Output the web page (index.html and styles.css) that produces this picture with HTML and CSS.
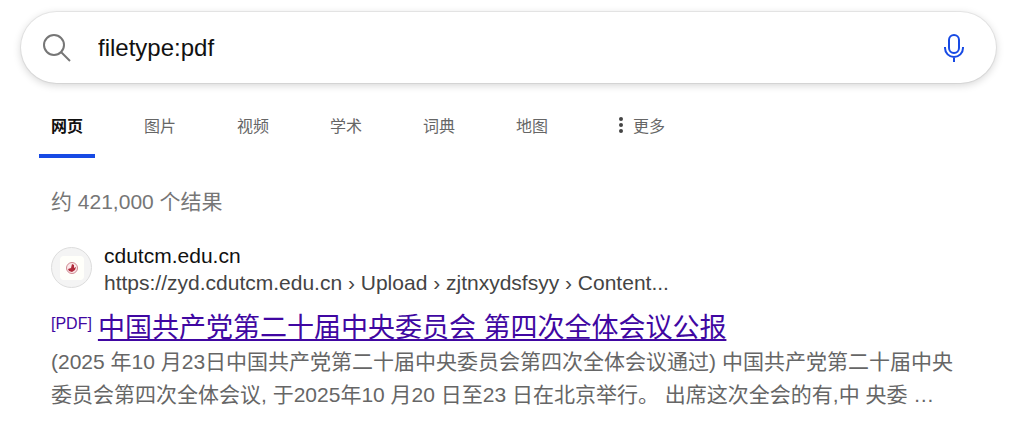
FILE: index.html
```html
<!DOCTYPE html>
<html lang="zh-CN">
<head>
<meta charset="UTF-8">
<meta name="viewport" content="width=device-width, initial-scale=1.0">
<title>filetype:pdf</title>
<link rel="stylesheet" href="styles.css">
</head>
<body>
    <header>
        <form class="search-box" role="search">
            <button type="submit" class="icon-button" aria-label="搜索">
                <svg width="28" height="28" viewBox="0 0 28 28" fill="none" stroke="#767676" stroke-width="2">
                    <circle cx="11" cy="11" r="10"/>
                    <path d="M18 18l9 9"/>
                </svg>
            </button>
            <input type="search" class="search-input" name="q" value="filetype:pdf" aria-label="搜索内容">
            <button type="button" class="icon-button" aria-label="语音搜索">
                <svg width="20" height="28" viewBox="0 0 20 28" fill="none" stroke="#174ae4" stroke-width="2">
                    <rect x="5" y="1" width="10" height="18" rx="5"/>
                    <path d="M1 13v1a9 9 0 0 0 18 0v-1M10 23v5"/>
                </svg>
            </button>
        </form>
        <nav class="tabs">
            <a href="#" class="tab active" aria-current="page">网页</a>
            <a href="#" class="tab">图片</a>
            <a href="#" class="tab">视频</a>
            <a href="#" class="tab">学术</a>
            <a href="#" class="tab">词典</a>
            <a href="#" class="tab">地图</a>
            <a href="#" class="tab more">
                <svg width="24" height="24" viewBox="0 0 24 24" fill="#444">
                    <circle cx="12" cy="6" r="2"/>
                    <circle cx="12" cy="12" r="2"/>
                    <circle cx="12" cy="18" r="2"/>
                </svg>更多</a>
        </nav>
    </header>

    <main class="results">
        <p class="count">约 421,000 个结果</p>
        <article>
            <a href="#" class="source">
                <span class="site-icon">
                    <svg width="24" height="24" viewBox="0 0 24 24">
                        <rect width="24" height="24" rx="4" fill="#fffffa"/>
                        <circle cx="12" cy="12" r="5.5" fill="#fbe9e9" stroke="#d08a92"/>
                        <path d="M12 8l2 1v3l2-1-1 3-3 2-3-1-1-2 3-1z" fill="#b02a3a"/>
                    </svg>
                </span>
                <span class="source-text">
                    <span class="site-name">cdutcm.edu.cn</span>
                    <cite class="site-url">https://zyd.cdutcm.edu.cn › Upload › zjtnxydsfsyy › Content...</cite>
                </span>
            </a>
            <h2 class="title"><span class="file-type">[PDF]</span><a href="#">中国共产党第二十届中央委员会 第四次全体会议公报</a></h2>
            <p class="snippet">(2025 年10 月23日中国共产党第二十届中央委员会第四次全体会议通过) 中国共产党第二十届中央委员会第四次全体会议, 于2025年10 月20 日至23 日在北京举行。 出席这次全会的有,中 央委 …</p>
        </article>
    </main>
</body>
</html>
```

FILE: styles.css
```css
* {
    margin: 0;
    padding: 0;
    box-sizing: border-box;
}
body {
    font-family: "Liberation Sans", "Noto Sans CJK SC", sans-serif;
    background-color: #fff;
    color: #666;
}
a {
    color: inherit;
    text-decoration: none;
}
svg {
    display: block;
}
.search-box {
    display: flex;
    align-items: center;
    height: 71px;
    margin: 12px 25px 0 21px;
    padding: 0 32px 0 22px;
    border-radius: 36px;
    background-color: #fff;
    box-shadow: 0 0 0 1px rgba(0, 0, 0, 0.06), 0 2px 8px rgba(0, 0, 0, 0.18);
}
.icon-button {
    border: none;
    background: none;
    cursor: pointer;
}
.search-input {
    flex: 1;
    min-width: 0;
    height: 32px;
    margin: 0 27px;
    border: none;
    outline: none;
    background: none;
    font-family: inherit;
    font-size: 24px;
    color: #111;
}
.tabs {
    display: flex;
    gap: 37px;
    margin: 19px 0 0 39px;
}
.tab {
    display: flex;
    align-items: center;
    height: 56px;
    padding: 0 12px 6px;
    border-bottom: 4px solid transparent;
    font-size: 16px;
    white-space: nowrap;
}
.tab.active {
    border-color: #174ae4;
    font-weight: bold;
    color: #111;
}
.results {
    padding: 24px 51px;
}
.count {
    font-size: 21px;
    line-height: 40px;
    color: #767676;
}
.source {
    display: flex;
    align-items: flex-start;
    gap: 12px;
    margin-top: 20px;
}
.site-icon {
    display: flex;
    flex: none;
    align-items: center;
    justify-content: center;
    width: 41px;
    height: 41px;
    margin-top: 5px;
    border: 1px solid #ddd;
    border-radius: 50%;
    background-color: #f4f4f4;
}
.source-text {
    display: flex;
    flex-direction: column;
    font-size: 21px;
    line-height: 27px;
}
.site-name {
    color: #111;
}
.site-url {
    font-style: normal;
    color: #444;
}
.title {
    display: flex;
    gap: 6px;
    margin-top: 14px;
    font-size: 27px;
    font-weight: normal;
    line-height: 36px;
    color: #4007a2;
}
.title a {
    text-decoration: underline;
}
.file-type {
    font-size: 16px;
    line-height: 28px;
}
.snippet {
    margin-top: -1px;
    font-size: 21px;
    line-height: 33px;
}
```
